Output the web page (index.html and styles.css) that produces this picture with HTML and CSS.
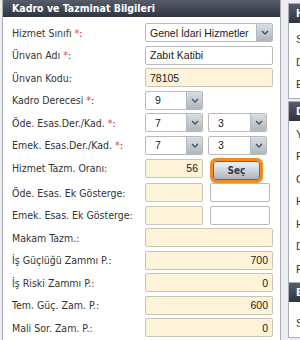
FILE: index.html
```html
<!DOCTYPE html>
<html lang="tr">
<head>
  <meta charset="UTF-8">
  <title>Kadro ve Tazminat Bilgileri</title>
  <link rel="stylesheet" href="styles.css">
</head>
<body>

  <div class="page">
    <div class="panel main">
      <div class="panel-head">Kadro ve Tazminat Bilgileri</div>
      <div class="panel-body">
        <div class="row">
          <label>Hizmet Sınıfı <span class="req">*</span>:</label>
          <div class="field select wide"><span class="val">Genel İdari Hizmetler</span><i class="arrow"><svg width="8" height="5" viewBox="0 0 8 5"><polyline points="1,1 4,4 7,1" fill="none" stroke="#4b525c" stroke-width="1.4"/></svg></i></div>
        </div>
        <div class="row">
          <label>Ünvan Adı <span class="req">*</span>:</label>
          <div class="field wide"><span class="val">Zabıt Katibi</span></div>
        </div>
        <div class="row">
          <label>Ünvan Kodu:</label>
          <div class="field wide ro"><span class="val">78105</span></div>
        </div>
        <div class="row">
          <label>Kadro Derecesi <span class="req">*</span>:</label>
          <div class="field select small"><span class="val">9</span><i class="arrow"><svg width="8" height="5" viewBox="0 0 8 5"><polyline points="1,1 4,4 7,1" fill="none" stroke="#4b525c" stroke-width="1.4"/></svg></i></div>
        </div>
        <div class="row">
          <label>Öde. Esas.Der./Kad. <span class="req">*</span>:</label>
          <div class="field select small"><span class="val">7</span><i class="arrow"><svg width="8" height="5" viewBox="0 0 8 5"><polyline points="1,1 4,4 7,1" fill="none" stroke="#4b525c" stroke-width="1.4"/></svg></i></div>
          <div class="field select small second"><span class="val">3</span><i class="arrow"><svg width="8" height="5" viewBox="0 0 8 5"><polyline points="1,1 4,4 7,1" fill="none" stroke="#4b525c" stroke-width="1.4"/></svg></i></div>
        </div>
        <div class="row">
          <label>Emek. Esas.Der./Kad. <span class="req">*</span>:</label>
          <div class="field select small"><span class="val">7</span><i class="arrow"><svg width="8" height="5" viewBox="0 0 8 5"><polyline points="1,1 4,4 7,1" fill="none" stroke="#4b525c" stroke-width="1.4"/></svg></i></div>
          <div class="field select small second"><span class="val">3</span><i class="arrow"><svg width="8" height="5" viewBox="0 0 8 5"><polyline points="1,1 4,4 7,1" fill="none" stroke="#4b525c" stroke-width="1.4"/></svg></i></div>
        </div>
        <div class="row tall">
          <label>Hizmet Tazm. Oranı:</label>
          <div class="field small ro num"><span class="val">56</span></div>
          <button class="btn">Seç</button>
        </div>
        <div class="row">
          <label>Öde. Esas. Ek Gösterge:</label>
          <div class="field small ro"></div>
          <div class="field extra"></div>
        </div>
        <div class="row">
          <label>Emek. Esas. Ek Gösterge:</label>
          <div class="field small ro"></div>
          <div class="field extra"></div>
        </div>
        <div class="row">
          <label>Makam Tazm.:</label>
          <div class="field wide ro num"></div>
        </div>
        <div class="row">
          <label>İş Güçlüğü Zammı P.:</label>
          <div class="field wide ro num"><span class="val">700</span></div>
        </div>
        <div class="row">
          <label>İş Riski Zammı P.:</label>
          <div class="field wide ro num"><span class="val">0</span></div>
        </div>
        <div class="row">
          <label>Tem. Güç. Zam. P.:</label>
          <div class="field wide ro num"><span class="val">600</span></div>
        </div>
        <div class="row">
          <label>Mali Sor. Zam. P.:</label>
          <div class="field wide ro num"><span class="val">0</span></div>
        </div>
      </div>
    </div>

    <div class="side">
      <div class="panel side-panel first">
        <div class="panel-head">H</div>
        <div class="side-body">
          <div class="side-row">S</div>
          <div class="side-row">D</div>
          <div class="side-row">E</div>
        </div>
      </div>
      <div class="panel side-panel">
        <div class="panel-head">D</div>
        <div class="side-body">
          <div class="side-row">Y</div>
          <div class="side-row">P</div>
          <div class="side-row">O</div>
          <div class="side-row">H</div>
          <div class="side-row">H</div>
          <div class="side-row">D</div>
          <div class="side-row">F</div>
        </div>
      </div>
      <div class="panel side-panel last">
        <div class="panel-head">E</div>
        <div class="side-body">
          <div class="side-row">S</div>
        </div>
      </div>
    </div>
  </div>

</body>
</html>
```

FILE: styles.css
```css
body {
  margin: 0;
  background: #eceef1;
  font-family: "DejaVu Sans Condensed", "DejaVu Sans", sans-serif;
  color: #2b2b2b;
  overflow: hidden;
}

.page {
  display: flex;
  align-items: flex-start;
  padding-left: 2px;
  height: 340px;
  overflow: hidden;
}

.panel {
  background: #fff;
  border: 1px solid #a9aeb6;
}

.main {
  flex-shrink: 0;
  width: 277px;
  border-top: none;
  height: 360px;
}

.panel-head {
  height: 17px;
  line-height: 17px;
  padding-left: 9px;
  background: linear-gradient(#565d69, #2f353f);
  color: #fff;
  font-weight: bold;
  font-size: 10.5px;
  white-space: nowrap;
}

.panel-body {
  padding: 4.25px 0 0 9px;
}

.row {
  display: flex;
  align-items: center;
  height: 22.5px;
}

.row label {
  width: 133px;
  flex-shrink: 0;
  font-size: 10.5px;
  color: #333;
  white-space: nowrap;
}

.req {
  color: #e0414e;
}

.field {
  display: flex;
  align-items: center;
  flex-shrink: 0;
  box-sizing: border-box;
  height: 19px;
  border: 1px solid #b9b9b9;
  border-radius: 2px;
  background: #fff;
  font-family: "Liberation Sans", Arial, sans-serif;
  font-size: 10.5px;
  color: #222;
  overflow: hidden;
}

.field .val {
  flex: 1;
  padding-left: 4px;
  white-space: nowrap;
}

.wide {
  width: 128px;
}

.small {
  width: 58px;
}

.small .val {
  padding-left: 9px;
}

.second {
  width: 59px;
  margin-left: 5px;
}

.extra {
  width: 60px;
  margin-left: 7px;
}

.ro {
  background: #fdf3d8;
  border-color: #c9c4b6;
}

.num .val {
  text-align: right;
  padding-right: 4px;
}

.select .arrow {
  display: flex;
  align-items: center;
  justify-content: center;
  width: 15px;
  height: 100%;
  border-left: 1px solid #b3b9c1;
  background: linear-gradient(#d9dee4, #aeb6bf);
}

.row.tall {
  height: 25px;
  align-items: flex-start;
}

.tall label {
  line-height: 19px;
  margin-top: 3px;
}

.tall .field {
  margin-top: 2.75px;
  height: 18.5px;
}

.btn {
  margin: 5px 0 0 10px;
  width: 47px;
  height: 19px;
  padding: 0;
  border: 1px solid #5f6672;
  border-radius: 3px;
  background: linear-gradient(#eef1f4, #cfd5dc 50%, #aab3be);
  box-shadow: 0 0 0 3px #f28c1f;
  font-family: "DejaVu Sans Condensed", "DejaVu Sans", sans-serif;
  font-size: 10px;
  font-weight: bold;
  color: #333a44;
}

.side {
  flex-shrink: 0;
  margin-left: 7px;
  width: 40px;
}

.side-panel {
  width: 160px;
}

.side-panel.first {
  margin-top: 3px;
  margin-bottom: 2px;
}

.side-panel .panel-head {
  height: 19px;
  line-height: 19px;
  padding-left: 7px;
}

.side-body {
  padding: 5px 0 2px 7px;
  font-family: "Liberation Sans", Arial, sans-serif;
  font-size: 11px;
  color: #333;
}

.side-panel:not(.first) .side-body {
  padding-top: 2px;
}

.side-panel.last {
  border-top: none;
}

.side-panel.last .side-body {
  padding-top: 10px;
}

.side-row {
  height: 22.5px;
  line-height: 22.5px;
  white-space: nowrap;
}
```
